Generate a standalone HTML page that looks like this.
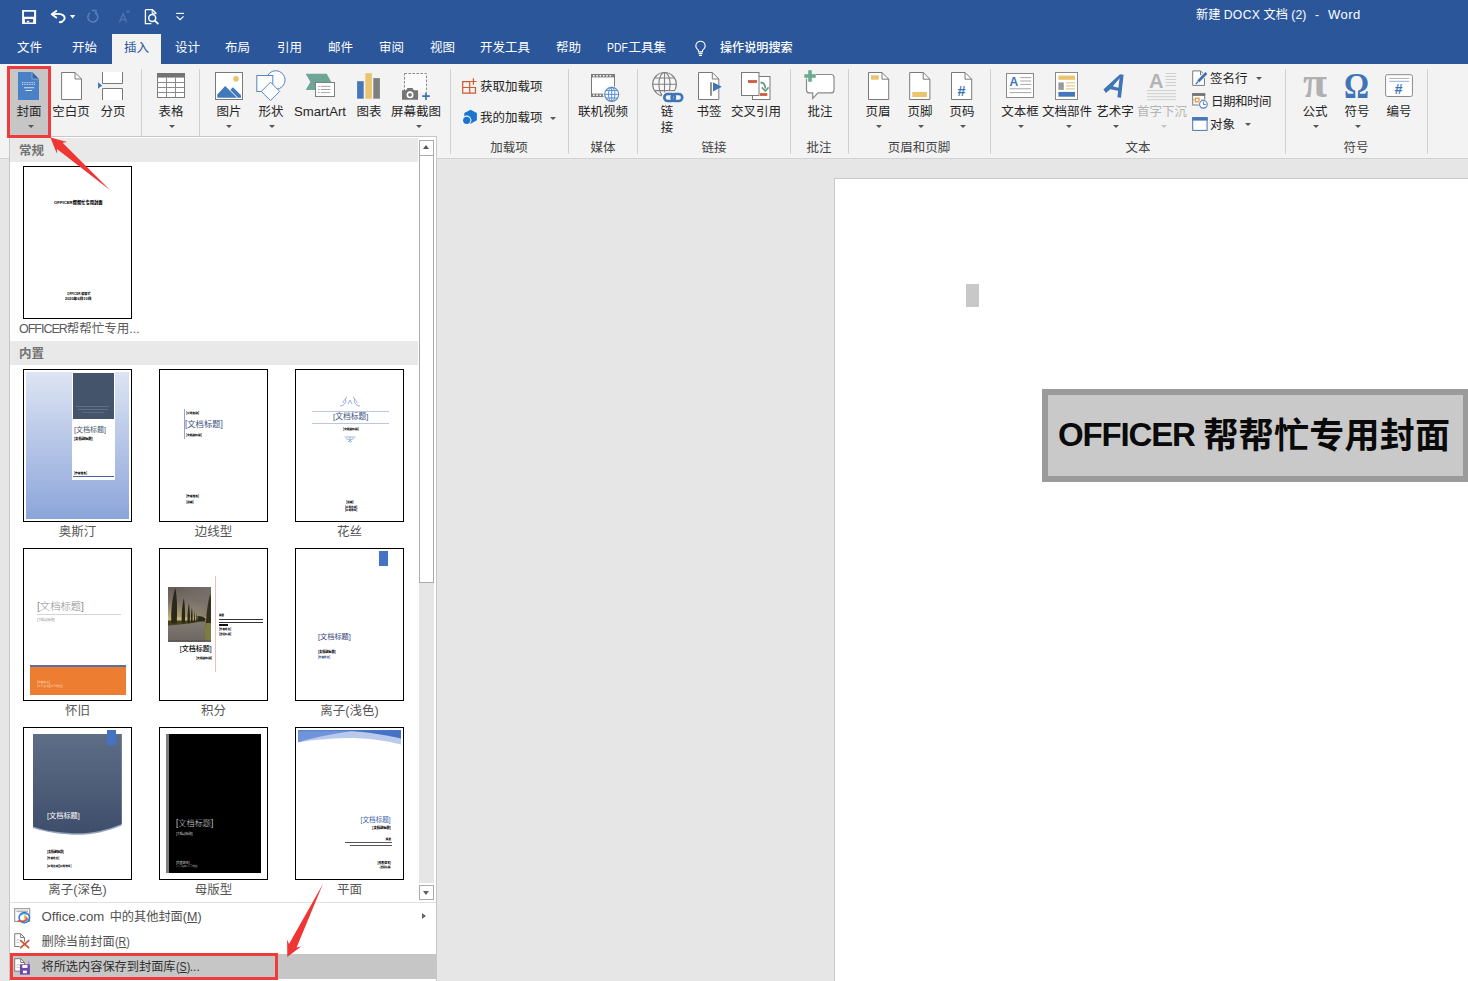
<!DOCTYPE html>
<html lang="zh-CN">
<head>
<meta charset="utf-8">
<title>Word</title>
<style>
*{box-sizing:border-box;margin:0;padding:0}
html,body{width:1468px;height:981px;overflow:hidden;background:#e6e6e6}
body{position:relative;font-family:"Liberation Sans","Noto Sans CJK SC",sans-serif;font-size:12px;color:#262626}
.abs{position:absolute}
#titlebar{position:absolute;left:0;top:0;width:1468px;height:64px;background:#2b579a}
#ribbon{position:absolute;left:0;top:64px;width:1468px;height:95px;background:#f3f3f3;border-bottom:1px solid #d2d2d2}
.tab{position:absolute;top:38px;height:20px;line-height:20px;color:#fff;font-size:12.5px;white-space:nowrap}
#tabactive{position:absolute;left:112px;top:34px;width:49px;height:31px;background:#f3f3f3}
.sep{position:absolute;top:69px;width:1px;height:85px;background:#d0d0d0}
.lbl{position:absolute;white-space:nowrap;font-size:12.5px;line-height:16px;color:#262626;text-align:center;transform:translateX(-50%)}
.grp{position:absolute;top:140px;white-space:nowrap;font-size:12.5px;line-height:16px;color:#444;transform:translateX(-50%)}
.dd{position:absolute;width:0;height:0;border-left:3px solid transparent;border-right:3px solid transparent;border-top:3px solid #555}
.sm{position:absolute;white-space:nowrap;font-size:12.5px;line-height:16px;color:#262626}
/* document */
#page{position:absolute;left:834px;top:178px;width:640px;height:810px;background:#fff;border:1px solid #c8c8c8}
#cursorblk{position:absolute;left:966px;top:284px;width:13px;height:23px;background:#c8c8c8}
#titlebox{position:absolute;left:1042px;top:389px;width:427px;height:93px;background:#c9c9c9;border:6px solid #9b9b9b}
#titletext{position:absolute;left:1058px;top:412px;font-size:35px;line-height:48px;font-weight:bold;color:#0a0a0a;white-space:nowrap;letter-spacing:0.3px}
#titletext span{font-size:33px;letter-spacing:-1.15px;margin-right:8.5px;position:relative;top:-2px}
/* dropdown panel */
#panel{position:absolute;left:9px;top:136px;width:428px;height:850px;background:#fff;border:1px solid #c6c6c6}
.hdr{position:absolute;left:10px;width:408px;height:24px;background:#e9e9e9;color:#727272;font-weight:bold;font-size:12.5px;line-height:26px;padding-left:9px}
.th{position:absolute;width:109px;height:153px;background:#fff;border:1px solid #000;overflow:hidden}
.thl{position:absolute;width:136px;text-align:center;font-size:12.5px;line-height:16px;color:#555;white-space:nowrap}
.tt{position:absolute;font-size:12px;line-height:12px;white-space:nowrap;transform-origin:0 0;display:block}
.mi{position:absolute;left:41.5px;font-size:12.2px;line-height:16px;color:#505050;white-space:nowrap}
.mi i{font-style:normal;font-size:12.5px;display:inline-block;transform:scaleX(0.85);transform-origin:0 50%;margin-right:-2.6px}
</style>
</head>
<body>
<div id="titlebar"></div>
<div id="tabactive"></div>
<div id="ribbon"></div>

<!-- QAT icons -->
<svg class="abs" style="left:20px;top:8px" width="170" height="18" viewBox="20 8 170 18" fill="none">
  <!-- save -->
  <path d="M22.100 10h14v14h-14z" fill="#fff"/>
  <path d="M24 11.700h10.100v5h-10.100zM24.900 19h8.200v3.500h-8.200z" fill="#2b579a"/>
  <path d="M26.800 20.800h2.400v1.600h-2.400z" fill="#fff"/>
  <!-- undo -->
  <path d="M52.600 14.300c4.200-.6 8-.6 10.400.8 2.400 1.500 2.200 4.600-.4 6.200-.9.500-1.800.8-2.800 1" stroke="#fff" stroke-width="1.900" stroke-linecap="round"/>
  <path d="M56.900 10.400l-5.200 3.800 5.200 3.800" stroke="#fff" stroke-width="1.800" stroke-linejoin="round"/>
  <path d="M69.900 15.100h5.400l-2.700 3.300z" fill="#fff"/>
  <!-- redo dim -->
  <path d="M95.2 12.6a5 5 0 1 1-5.2.3" stroke="#5a7fba" stroke-width="1.6"/>
  <path d="M92 10.4h4v4" stroke="#5a7fba" stroke-width="1.5"/>
  <!-- A dim -->
  <path d="M119.5 22.3l3.6-8.6 3.6 8.6M120.8 19.6h4.6" stroke="#4f74b0" stroke-width="1.4"/>
  <path d="M125.8 10.8h4.4l-2.2 2.4z" fill="#4f74b0"/>
  <!-- print preview -->
  <path d="M145.4 9.7h7l3.4 3.4v1.2M145.4 9.7v13.9h6" stroke="#fff" stroke-width="1.3"/>
  <path d="M152.2 9.9v3.4h3.4" stroke="#fff" stroke-width="1"/>
  <circle cx="152.2" cy="18" r="3.5" stroke="#fff" stroke-width="1.5"/>
  <path d="M154.8 20.6l3.6 3.6" stroke="#fff" stroke-width="1.8"/>
  <!-- customize -->
  <path d="M176.2 13.4h7.8" stroke="#fff" stroke-width="1.1"/>
  <path d="M176.6 16.4l3.5 3.3 3.5-3.3" stroke="#fff" stroke-width="1.2"/>
</svg>
<div class="abs" style="left:1196px;top:6px;font-size:12.2px;line-height:18px;color:#fff;white-space:nowrap">新建 <span style="letter-spacing:0.3px">DOCX</span> 文档 (2)</div>
<div class="abs" style="left:1315px;top:6px;font-size:12.2px;line-height:18px;color:#fff">-</div>
<div class="abs" style="left:1328px;top:6px;font-size:13px;line-height:18px;color:#fff;letter-spacing:0.5px">Word</div>

<!-- tabs -->
<div class="tab" style="left:17px">文件</div>
<div class="tab" style="left:72px">开始</div>
<div class="tab" style="left:124px;color:#2b579a">插入</div>
<div class="tab" style="left:175px">设计</div>
<div class="tab" style="left:225px">布局</div>
<div class="tab" style="left:277px">引用</div>
<div class="tab" style="left:328px">邮件</div>
<div class="tab" style="left:379px">审阅</div>
<div class="tab" style="left:430px">视图</div>
<div class="tab" style="left:480px">开发工具</div>
<div class="tab" style="left:556px">帮助</div>
<div class="tab" style="left:607px"><span style="display:inline-block;font-size:13px;transform:scaleX(0.8);transform-origin:0 50%;margin-right:-4.6px">PDF</span>工具集</div>
<svg class="abs" style="left:693px;top:40px" width="15" height="17" viewBox="0 0 15 17" fill="none">
  <path d="M7.5 1.2a4.6 4.6 0 0 0-2.6 8.4c.5.5.7 1.100.7 2v.3h3.800v-.3c0-.9.200-1.500.7-2A4.600 4.600 0 0 0 7.500 1.200z" stroke="#fff" stroke-width="1.1"/>
  <path d="M5.6 13.6h3.800M6 15.500h3" stroke="#fff" stroke-width="1.100"/>
</svg>
<div class="tab" style="left:720px;font-weight:500;font-size:12.1px">操作说明搜索</div>


<!-- cover button highlight -->
<div class="abs" style="left:9px;top:67px;width:41px;height:69px;background:#c6c6c6"></div>
<!-- ribbon separators -->
<div class="sep" style="left:141px"></div>
<div class="sep" style="left:199px"></div>
<div class="sep" style="left:450px"></div>
<div class="sep" style="left:568px"></div>
<div class="sep" style="left:637px"></div>
<div class="sep" style="left:790px"></div>
<div class="sep" style="left:848px"></div>
<div class="sep" style="left:990px"></div>
<div class="sep" style="left:1285px"></div>
<div class="sep" style="left:1427px"></div>
<!-- big button labels -->
<div class="lbl" style="left:29px;top:104px">封面</div>
<div class="dd" style="left:28px;top:125px"></div>
<div class="lbl" style="left:71px;top:104px">空白页</div>
<div class="lbl" style="left:113px;top:104px">分页</div>
<div class="lbl" style="left:171px;top:104px">表格</div>
<div class="dd" style="left:169px;top:125px"></div>
<div class="lbl" style="left:229px;top:104px">图片</div>
<div class="dd" style="left:226px;top:125px"></div>
<div class="lbl" style="left:271px;top:104px">形状</div>
<div class="dd" style="left:269px;top:125px"></div>
<div class="lbl" style="left:320px;top:104px"><span style="font-size:13.2px">SmartArt</span></div>
<div class="lbl" style="left:369px;top:104px">图表</div>
<div class="lbl" style="left:416px;top:104px">屏幕截图</div>
<div class="dd" style="left:416px;top:125px"></div>
<div class="lbl" style="left:603px;top:104px">联机视频</div>
<div class="lbl" style="left:709px;top:104px">书签</div>
<div class="lbl" style="left:756px;top:104px">交叉引用</div>
<div class="lbl" style="left:820px;top:104px">批注</div>
<div class="lbl" style="left:878px;top:104px">页眉</div>
<div class="dd" style="left:876px;top:125px"></div>
<div class="lbl" style="left:920px;top:104px">页脚</div>
<div class="dd" style="left:918px;top:125px"></div>
<div class="lbl" style="left:962px;top:104px">页码</div>
<div class="dd" style="left:960px;top:125px"></div>
<div class="lbl" style="left:1020px;top:104px">文本框</div>
<div class="dd" style="left:1018px;top:125px"></div>
<div class="lbl" style="left:1067px;top:104px">文档部件</div>
<div class="dd" style="left:1066px;top:125px"></div>
<div class="lbl" style="left:1115px;top:104px">艺术字</div>
<div class="dd" style="left:1113px;top:125px"></div>
<div class="lbl" style="left:1162px;top:104px;color:#b4b4b4">首字下沉</div>
<div class="dd" style="left:1161px;top:125px;border-top-color:#c4c4c4"></div>
<div class="lbl" style="left:1315px;top:104px">公式</div>
<div class="dd" style="left:1313px;top:125px"></div>
<div class="lbl" style="left:1357px;top:104px">符号</div>
<div class="dd" style="left:1355px;top:125px"></div>
<div class="lbl" style="left:1399px;top:104px">编号</div>
<div class="lbl" style="left:667px;top:104px;line-height:16px">链<br>接</div>
<!-- group labels -->
<div class="grp" style="left:509px">加载项</div>
<div class="grp" style="left:603px">媒体</div>
<div class="grp" style="left:714px">链接</div>
<div class="grp" style="left:819px">批注</div>
<div class="grp" style="left:919px">页眉和页脚</div>
<div class="grp" style="left:1138px">文本</div>
<div class="grp" style="left:1356px">符号</div>
<!-- small buttons -->
<div class="sm" style="left:480px;top:79px">获取加载项</div>
<div class="sm" style="left:480px;top:110px">我的加载项</div>
<div class="dd" style="left:550px;top:117px"></div>
<div class="sm" style="left:1210px;top:71px">签名行</div>
<div class="dd" style="left:1256px;top:77px"></div>
<div class="sm" style="left:1211px;top:94px;letter-spacing:-0.5px">日期和时间</div>
<div class="sm" style="left:1210px;top:117px">对象</div>
<div class="dd" style="left:1245px;top:123px"></div>

<svg class="abs" style="left:0;top:64px" width="1468" height="74" viewBox="0 64 1468 74" fill="none" font-family="'Liberation Sans','Noto Sans CJK SC',sans-serif">
<!-- 封面 -->
<path d="M18 72h14l7 7v21H18z" fill="#4a80c6"/>
<path d="M32 72v7h7z" fill="#3565a8"/>
<path d="M32 72v7h7" stroke="#8fb2e0" stroke-width="0.8"/>
<path d="M22 82.700h13M22 84.500h13" stroke="#bcd2ee" stroke-width="1.200" stroke-dasharray="1 0.700"/>
<path d="M24 87.800h10.200M25.500 90.500h6.500" stroke="#d6e4f6" stroke-width="1.100"/>
<!-- 空白页 -->
<path d="M61.600 72.500h13.400l6.500 6.500v20.500H61.600z" fill="#fff" stroke="#7a7a7a"/>
<path d="M75 72.500v6.500h6.500" stroke="#7a7a7a"/>
<!-- 分页 -->
<path d="M102.500 72v11.500h20V72z" fill="#fff"/>
<path d="M102.500 100V88.500h20V100z" fill="#fff"/>
<path d="M102.500 72v11.500h20V72M102.500 100V88.500h20V100" stroke="#7a7a7a"/>
<path d="M98 82.200l4.300 3.300-4.300 3.300z" fill="#4a78b8"/>
<!-- 表格 -->
<rect x="157.500" y="73.500" width="27" height="24" fill="#fff" stroke="#7c7c7c"/>
<rect x="157" y="73" width="28" height="4.600" fill="#737373"/>
<path d="M157.500 82.500h27M157.500 87.500h27M157.500 92.500h27M166.500 77.500v20M175.500 77.500v20" stroke="#8a8a8a"/>
<!-- 图片 -->
<rect x="215.500" y="72.500" width="27" height="27" fill="#fff" stroke="#7a7a7a"/>
<circle cx="236" cy="78.800" r="2.800" fill="#e8c468"/>
<path d="M217.300 97.800v-3.300l7.900-8.500 11.800 11.800z" fill="#4178ba"/>
<path d="M230.300 89.900l2.700-2.700 8 8v2.600h-3z" fill="#4178ba"/>
<!-- 形状 -->
<circle cx="275.800" cy="80" r="9.300" fill="#fbfdff" stroke="#5a86bf" stroke-width="1"/>
<rect x="256.800" y="75.500" width="16" height="16" fill="#fbfdff" stroke="#5a86bf" stroke-width="1"/>
<path d="M270.500 82.200l9.200 9.200-9.200 9.200-9.200-9.200z" fill="#fbfdff" stroke="#5a86bf" stroke-width="1"/>
<!-- SmartArt -->
<path d="M305.700 73.800h21l4.600 8.100-4.600 8.100h-21l4.700-8.100z" fill="#6fa595"/>
<rect x="315.500" y="82.500" width="19" height="14" fill="#fff" stroke="#7f7f7f"/>
<path d="M320.800 86.400h9.500M320.800 89.500h9.500M320.800 92.600h9.500" stroke="#9a9a9a" stroke-width="0.900"/>
<path d="M318.300 86.400h1.300M318.300 89.500h1.300M318.300 92.600h1.300" stroke="#7f7f7f" stroke-width="0.900"/>
<!-- 图表 -->
<rect x="357.100" y="81.200" width="6.600" height="17.500" fill="#4478ba"/>
<rect x="365.300" y="73.200" width="6.600" height="25.500" fill="#ebc46f"/>
<rect x="373.300" y="78.100" width="6.600" height="20.600" fill="#7f7f7f"/>
<!-- 屏幕截图 -->
<rect x="404.500" y="73.500" width="22" height="21" fill="#fbfbfb" stroke="#8a8a8a" stroke-dasharray="2.500 1.500"/>
<path d="M402 90.200h4.200l1.300-2.200h5l1.300 2.200h4.300v9.600H402z" fill="#757575"/>
<rect x="418.500" y="92" width="10" height="9" fill="#f3f3f3"/>
<circle cx="410" cy="94.800" r="3.500" fill="#fff"/>
<circle cx="410" cy="94.800" r="1.900" fill="#757575"/>
<path d="M422.200 96.200h7.600M426 92.400v7.600" stroke="#3d6fb4" stroke-width="1.700"/>
<!-- 获取加载项 -->
<path d="M462.700 81.700h7v5.800h5.800v5.700h-12.800zM469.700 87.500v5.700M462.700 87.500h7" stroke="#d05a2c" stroke-width="1.200"/>
<path d="M473.400 78.300v6.400M470.200 81.500h6.400" stroke="#d05a2c" stroke-width="1.200"/>
<!-- 我的加载项 -->
<path d="M470.600 109.700l6.300 3.300v7.300l-6.300 3.400-6.300-3.400v-7.300z" fill="#1b74d0"/>
<circle cx="466.700" cy="120.300" r="4.700" fill="#f3f3f3"/>
<circle cx="466.700" cy="120.300" r="3.600" fill="#1b74d0"/>
<!-- 联机视频 -->
<rect x="591.500" y="74.500" width="23" height="22" fill="#fff" stroke="#7a7a7a"/>
<rect x="591" y="74" width="24" height="3.400" fill="#7a7a7a"/>
<rect x="591" y="93.600" width="24" height="3.400" fill="#7a7a7a"/>
<path d="M593 75.700h20M593 95.300h20" stroke="#fff" stroke-width="1.400" stroke-dasharray="1.600 1.700"/>
<circle cx="611.700" cy="94.300" r="8.600" fill="#f3f3f3"/>
<circle cx="611.700" cy="94.300" r="7" fill="#fff" stroke="#5a8ccc" stroke-width="1.200"/>
<ellipse cx="611.700" cy="94.300" rx="3.200" ry="7" stroke="#5a8ccc" stroke-width="1"/>
<path d="M604.700 94.300h14M611.700 87.300v14M605.800 90.600h11.800M605.800 98h11.800" stroke="#5a8ccc" stroke-width="1"/>
<!-- 链接 -->
<circle cx="664.500" cy="84.300" r="11.800" fill="#f7f7f7" stroke="#808080" stroke-width="1.200"/>
<ellipse cx="664.500" cy="84.300" rx="5.600" ry="11.800" stroke="#808080" stroke-width="1.100"/>
<path d="M652.700 84.300h23.600M664.500 72.500v23.600M654.600 78h19.800M654.600 90.600h19.800" stroke="#808080" stroke-width="1.100"/>
<rect x="661.500" y="91.200" width="23.500" height="12.600" rx="6.300" fill="#f3f3f3"/>
<rect x="664.300" y="94" width="10.600" height="7" rx="3.500" stroke="#3f74b6" stroke-width="2.600"/>
<rect x="671.600" y="94" width="10.600" height="7" rx="3.500" stroke="#3f74b6" stroke-width="2.600"/>
<!-- 书签 -->
<path d="M698.500 72.500h13.800l6.500 6.500v20.500h-20.300z" fill="#fff" stroke="#7a7a7a"/>
<path d="M712.300 72.500v6.500h6.500" stroke="#7a7a7a"/>
<path d="M711 82.200v13.600" stroke="#767676" stroke-width="1.600"/>
<path d="M713 82.200l8.800 4.600-8.800 4.600z" fill="#3d73b7"/>
<!-- 交叉引用 -->
<rect x="752.500" y="76.500" width="17.500" height="23" fill="#fff" stroke="#7a7a7a"/>
<rect x="741.500" y="72.500" width="17.500" height="23" fill="#fff" stroke="#7a7a7a"/>
<rect x="748" y="80.100" width="9" height="2.800" fill="#d05a3c"/>
<rect x="760" y="93.100" width="7.300" height="2.800" fill="#d05a3c"/>
<path d="M760.500 82.300c3 .3 4.800 2.300 4.800 6.200" stroke="#5d9b7d" stroke-width="1.700"/>
<path d="M761.800 87.400l3.500 3.600 3.300-3.600" stroke="#5d9b7d" stroke-width="1.600"/>
<!-- 批注 -->
<path d="M809.500 74.500h21.500a3 3 0 0 1 3 3v12.400a3 3 0 0 1-3 3h-13l-5.300 5.600v-5.600h-3.200a3 3 0 0 1-3-3V77.500a3 3 0 0 1 3-3z" fill="#fff" stroke="#8a8a8a" stroke-width="1.200"/>
<path d="M810 70.300v11.400M804.300 76h11.400" stroke="#f3f3f3" stroke-width="5.500"/>
<path d="M810 70.300v11.400M804.300 76h11.400" stroke="#6aa890" stroke-width="3.500"/>
<!-- 页眉 -->
<path d="M868.500 72.500h13.500l6.700 6.700v20.300h-20.200z" fill="#fff" stroke="#7a7a7a"/>
<path d="M882 72.500v6.700h6.700" stroke="#7a7a7a"/>
<rect x="871" y="75.300" width="7.800" height="4.400" fill="#eac46e"/>
<!-- 页脚 -->
<path d="M909.700 72.500h13.500l6.700 6.700v20.300h-20.200z" fill="#fff" stroke="#7a7a7a"/>
<path d="M923.200 72.500v6.700h6.700" stroke="#7a7a7a"/>
<rect x="912.300" y="92" width="14.600" height="5" fill="#eac46e"/>
<!-- 页码 -->
<path d="M951.500 72.500h13.500l6.700 6.700v20.300h-20.200z" fill="#fff" stroke="#7a7a7a"/>
<path d="M965 72.500v6.700h6.700" stroke="#7a7a7a"/>
<text x="961.300" y="96.200" font-size="14.500" font-weight="bold" font-style="italic" fill="#3d72b7" text-anchor="middle">#</text>
<!-- 文本框 -->
<rect x="1006.500" y="73.500" width="27" height="24" fill="#fff" stroke="#8a8a8a"/>
<text x="1013.800" y="85.800" font-size="12" font-weight="bold" fill="#3f74b7" text-anchor="middle">A</text>
<path d="M1020.200 77.600h11M1020.200 81h11M1020.200 84.400h11M1009.400 88.800h21.800M1009.400 92.600h21.800" stroke="#a6a6a6" stroke-width="1"/>
<!-- 文档部件 -->
<rect x="1055.500" y="72.500" width="22" height="27" fill="#fff" stroke="#8a8a8a"/>
<rect x="1058.400" y="75.600" width="16.600" height="4.200" fill="#eac46e"/>
<rect x="1058.400" y="82.400" width="5.400" height="7.500" fill="#9a9a9a"/>
<path d="M1065.800 82.900h9.200M1065.800 85.900h9.200M1065.800 88.900h9.200" stroke="#d9b865" stroke-width="0.900"/>
<rect x="1058.400" y="91.900" width="16.600" height="4.800" fill="#4478ba"/>
<!-- 艺术字 -->
<path d="M1103.400 89.400l16.600-15.200 3.600.6-2.600 23-3.600-.6.700-6.400-7.800-1.500-4.400 3.800zM1118.400 87.700l1.200-9.400-6.800 7.900z" fill="#3f74b7" fill-rule="evenodd"/>
<!-- 首字下沉 -->
<text x="1156.200" y="87.800" font-size="20.500" font-weight="bold" fill="#b3b3b3" text-anchor="middle" textLength="14.500" lengthAdjust="spacingAndGlyphs">A</text>
<path d="M1165.500 73.500h10.700M1165.500 76.500h10.700M1165.500 79.500h10.700M1165.500 82.500h10.700M1165.500 85.500h10.700M1147 90.600h29.200M1147 93.700h29.200M1147 96.700h29.200M1147 99.700h29.200" stroke="#cfcfcf" stroke-width="1"/>
<!-- 签名行 -->
<path d="M1192.700 70.900h7.800l4 4v10.500h-11.800z" fill="#fff" stroke="#7a7a7a"/>
<path d="M1200.500 70.900v4h4" stroke="#7a7a7a"/>
<path d="M1206.200 73.200l-9 9.200" stroke="#f3f3f3" stroke-width="4.500"/>
<path d="M1206.400 73l-8.200 8.400" stroke="#3f6fb0" stroke-width="2.600"/>
<path d="M1198 81.600l-2.200 2.400" stroke="#3f6fb0" stroke-width="1.400"/>
<!-- 日期和时间 -->
<rect x="1192.700" y="93.800" width="12" height="11.200" fill="#fff" stroke="#7a7a7a"/>
<rect x="1192.200" y="93.300" width="13" height="2.600" fill="#737373"/>
<rect x="1195.400" y="98.200" width="3.600" height="3.600" fill="#fff" stroke="#e8954a" stroke-width="1.300"/>
<path d="M1192.700 99.700h2M1200.700 99.700h4" stroke="#9a9a9a" stroke-width="0.800"/>
<circle cx="1203.400" cy="104.300" r="4.900" fill="#f3f3f3"/>
<circle cx="1203.400" cy="104.300" r="3.800" fill="#fff" stroke="#4a7cc0" stroke-width="1.100"/>
<path d="M1203.400 101.800v2.700h2.300" stroke="#4a7cc0" stroke-width="1"/>
<!-- 对象 -->
<rect x="1192.700" y="117.700" width="14.400" height="12.700" fill="#fbfdff" stroke="#4a76b8"/>
<rect x="1192.200" y="117.200" width="15.400" height="3.400" fill="#4a76b8"/>
<!-- 公式 -->
<text x="1314.900" y="96.500" font-family="'Liberation Serif',serif" font-weight="bold" font-size="45" fill="#b0b0b0" text-anchor="middle" textLength="24" lengthAdjust="spacingAndGlyphs">π</text>
<!-- 符号 -->
<text x="1356.500" y="97.600" font-family="'Liberation Serif',serif" font-weight="bold" font-size="36" fill="#3f74b7" text-anchor="middle" textLength="25" lengthAdjust="spacingAndGlyphs">Ω</text>
<!-- 编号 -->
<rect x="1385.600" y="74.700" width="26.800" height="21.800" rx="1.800" fill="#fff" stroke="#8a8a8a"/>
<path d="M1389.200 78.400h20" stroke="#a6a6a6" stroke-width="0.900"/>
<path d="M1389.200 81.300h20" stroke="#8aa6cc" stroke-width="0.900"/>
<text x="1398.300" y="93.800" font-size="14" font-weight="bold" font-style="italic" fill="#3d72b7" text-anchor="middle">#</text>
</svg>


<!-- document area -->
<div id="page"></div>
<div id="cursorblk"></div>
<div id="titlebox"></div>
<div id="titletext"><span>OFFICER</span>帮帮忙专用封面</div>

<!-- dropdown panel -->
<div id="panel"></div>
<div class="hdr" style="top:138px">常规</div>
<div class="hdr" style="top:341px">内置</div>
<div class="th" style="left:23px;top:166px"><span class="tt" style="left:29.5px;top:33px;transform:scale(0.355);color:#000;font-weight:900;">OFFICER帮帮忙专用封面</span><span class="tt" style="left:43px;top:125.2px;transform:scale(0.255);color:#000;font-weight:900;">OFFICER 帮帮忙</span><span class="tt" style="left:41px;top:130.3px;transform:scale(0.32);color:#000;font-weight:900;">2020年6月10日</span></div>
<div class="abs" style="left:19px;top:320px;font-size:12.5px;line-height:18px;color:#5a5a5a;white-space:nowrap"><span style="letter-spacing:-1px">OFFICER</span>帮帮忙专用...</div>
<div class="th" style="left:23px;top:369px"><div class="abs" style="left:2px;top:2px;width:103px;height:147px;background:linear-gradient(#dde4f3,#b9c8e8 45%,#8ba5da)"></div><div class="abs" style="left:47.500px;top:2px;width:43px;height:108px;background:#fff"></div><div class="abs" style="left:48.500px;top:3px;width:41px;height:46px;background:#44546a"></div><div class="abs" style="left:52px;top:36px;width:33px;height:1px;background:#626f86"></div><div class="abs" style="left:54px;top:39px;width:30px;height:1px;background:#626f86"></div><div class="abs" style="left:58px;top:42px;width:22px;height:1px;background:#5d6a81"></div><span class="tt" style="left:49.5px;top:55.5px;transform:scale(0.583);color:#44546a;">[文档标题]</span><span class="tt" style="left:50px;top:67px;transform:scale(0.275);color:#000;font-weight:900;">[文档副标题]</span><span class="tt" style="left:50px;top:101.5px;transform:scale(0.233);color:#000;font-weight:900;">[作者姓名]</span><div class="abs" style="left:48.500px;top:106px;width:41px;height:1.200px;background:#4a66a0"></div></div>
<div class="th" style="left:159px;top:369px"><div class="abs" style="left:23.500px;top:38.500px;width:1px;height:30px;background:#8fa2d4"></div><span class="tt" style="left:25.5px;top:42px;transform:scale(0.233);color:#000;font-weight:900;">[公司名称]</span><span class="tt" style="left:25px;top:49.5px;transform:scale(0.692);color:#3b4f81;">[文档标题]</span><span class="tt" style="left:25.5px;top:63.5px;transform:scale(0.233);color:#000;font-weight:900;">[文档副标题]</span><span class="tt" style="left:25.5px;top:125px;transform:scale(0.233);color:#000;font-weight:900;">[作者姓名]</span><span class="tt" style="left:25.5px;top:130.5px;transform:scale(0.233);color:#000;font-weight:900;">[日期]</span></div>
<div class="th" style="left:295px;top:369px"><svg class="abs" style="left:43px;top:26px" width="22" height="12" viewBox="0 0 22 12" fill="none" stroke="#8fa8d8" stroke-width="0.900"><path d="M1 10c3 0 5-2 6-5M21 10c-3 0-5-2-6-5M7 5c-1-1-1-3 1-4M15 5c1-1 1-3-1-4M4 7c0-2 1-3 2-3M18 7c0-2-1-3-2-3M9 8l2-4 2 4"/></svg><div class="abs" style="left:16px;top:40.800px;width:77px;height:1px;background:#bcc8de"></div><span class="tt" style="left:36.5px;top:41.8px;transform:scale(0.650);color:#3b4f81;">[文档标题]</span><div class="abs" style="left:16px;top:53.400px;width:77px;height:1px;background:#bcc8de"></div><span class="tt" style="left:46.5px;top:57.5px;transform:scale(0.233);color:#000;font-weight:900;">[文档副标题]</span><svg class="abs" style="left:48px;top:66px" width="12" height="8" viewBox="0 0 12 8" fill="none" stroke="#8fb0d8" stroke-width="0.900"><path d="M0.500 1h11M2 2.500l4 1.500 4-1.500M6 1v6M4 6l2-2 2 2"/></svg><span class="tt" style="left:49.5px;top:130.5px;transform:scale(0.233);color:#000;font-weight:900;">[日期]</span><span class="tt" style="left:48.5px;top:136px;transform:scale(0.217);color:#000;font-weight:900;">[公司名称]</span><span class="tt" style="left:48.5px;top:139px;transform:scale(0.217);color:#000;font-weight:900;">[公司地址]</span></div>
<div class="th" style="left:23px;top:548px"><span class="tt" style="left:12.5px;top:51.5px;transform:scale(0.858);color:#8c8c8c;font-weight:300;">[文档标题]</span><div class="abs" style="left:13px;top:64.500px;width:84px;height:1px;background:#d4d4d4"></div><span class="tt" style="left:13px;top:68.5px;transform:scale(0.267);color:#8a8a8a;">[文档副标题]</span><div class="abs" style="left:5.500px;top:116px;width:96px;height:29.500px;background:#ed7d31"></div><div class="abs" style="left:5.500px;top:116px;width:96px;height:2.200px;background:#5b6fa5"></div><span class="tt" style="left:13px;top:132px;transform:scale(0.233);color:#fbd9bf;">[作者姓名]</span><span class="tt" style="left:13px;top:136px;transform:scale(0.233);color:#fbd9bf;">[公司名称][公司地址]</span></div>
<div class="th" style="left:159px;top:548px"><svg class="abs" style="left:7.700px;top:38px" width="43.300" height="54.800" viewBox="0 0 43.300 54.800" preserveAspectRatio="none"><defs><linearGradient id="sky" x1="0" y1="0" x2="0" y2="1"><stop offset="0" stop-color="#625753"/><stop offset="0.250" stop-color="#7a6f66"/><stop offset="0.450" stop-color="#a89a72"/><stop offset="0.620" stop-color="#cdbf80"/><stop offset="0.660" stop-color="#6a6838"/><stop offset="1" stop-color="#6a6838"/></linearGradient><linearGradient id="skr" x1="0" y1="0" x2="1" y2="0"><stop offset="0" stop-color="#7a716d" stop-opacity="0"/><stop offset="0.550" stop-color="#7a716d" stop-opacity="0.550"/><stop offset="1" stop-color="#77706c" stop-opacity="0.850"/></linearGradient><linearGradient id="road" x1="0" y1="0" x2="0" y2="1"><stop offset="0" stop-color="#857e74"/><stop offset="1" stop-color="#6c6562"/></linearGradient></defs><rect width="43.300" height="54.800" fill="url(#sky)"/><rect width="43.300" height="30" fill="url(#skr)"/><path d="M0 33.500h30l7-1.500 6.300 1v6H0z" fill="#45421f"/><path d="M0 38.500c12-.8 26-2.300 33-4.800 2.500-1 3.600-2.200 4-3.200l1.300.4c-.2 2.500-1.300 8-1.800 24H0z" fill="url(#road)"/><path d="M38.300 31l5 1v22.800h-6.800c.5-12 1-19 1.800-23.800z" fill="#7d7a42"/><path d="M7.300 1c1.600 7 2.300 22 1.400 35.500H3.400C2.600 24 4.800 8 7.300 1zM15.800 11.200c1.200 6 1.700 16 1.200 25h-3.200c-.5-9 .5-19 2-25zM20.900 16.600c.9 5 1.300 13 1 19.600h-2.300c-.4-6.500.2-14.600 1.300-19.600zM23.900 20.500c.7 4 .9 10 .7 15.500h-1.700c-.3-5.500.2-11.500 1-15.500zM26.400 23.500l.8 12h-1.600zM28.300 26l.7 9h-1.400zM29.500 29c3 0 6 .8 7.800 2.200l-.5 3.300H29z" fill="#2c2817"/><path d="M42.500 6.500c.5 5 .8 10 .8 14v15.500h-5.300c.5-11 2-22 4.500-29.500z" fill="#322e1a"/><rect y="53" width="43.300" height="1.800" fill="#5a5452" opacity="0.700"/></svg><div class="abs" style="left:55.200px;top:27px;width:1px;height:96px;background:#ecc0b4"></div><span class="tt" style="right:55.5px;top:96px;transform:scale(0.583);transform-origin:100% 0;color:#000;font-weight:500;">[文档标题]</span><span class="tt" style="right:55.5px;top:107.5px;transform:scale(0.233);transform-origin:100% 0;color:#000;font-weight:900;">[文档副标题]</span><span class="tt" style="left:59px;top:64.5px;transform:scale(0.217);color:#000;font-weight:900;">摘要</span><div class="abs" style="left:59px;top:69.800px;width:44px;height:1.400px;background:#333"></div><div class="abs" style="left:59px;top:72.500px;width:44px;height:1.400px;background:#333"></div><div class="abs" style="left:59px;top:75.200px;width:9px;height:1.400px;background:#111"></div><span class="tt" style="left:59px;top:79px;transform:scale(0.217);color:#000;font-weight:900;">[作者姓名]</span><span class="tt" style="left:59px;top:83.5px;transform:scale(0.217);color:#000;font-weight:900;">[课程标题]</span></div>
<div class="th" style="left:295px;top:548px"><div class="abs" style="left:83.400px;top:2.300px;width:8.200px;height:15.200px;background:#4472c4"></div><span class="tt" style="left:21.5px;top:84px;transform:scale(0.600);color:#2f3f7a;">[文档标题]</span><span class="tt" style="left:22px;top:100.5px;transform:scale(0.258);color:#000;font-weight:900;">[文档副标题]</span><span class="tt" style="left:22px;top:106.5px;transform:scale(0.217);color:#2f3f7a;font-weight:900;">[作者姓名]</span></div>
<div class="th" style="left:23px;top:727px"><svg class="abs" style="left:9.400px;top:5.600px" width="89" height="103" viewBox="0 0 89 103"><defs><linearGradient id="ion" x1="0" y1="0" x2="0" y2="1"><stop offset="0" stop-color="#5f6e87"/><stop offset="1" stop-color="#3e4e6b"/></linearGradient></defs><path d="M0 0h88.700v91.500c-14 6-30 9.300-44 9.300S12 98 0 94z" fill="#93a3bc"/><path d="M0 0h88.700v90c-14 6-30 9.300-44 9.300S12 97 0 92.500z" fill="url(#ion)"/></svg><div class="abs" style="left:83.300px;top:2.300px;width:8.600px;height:15.200px;background:#4472c4"></div><span class="tt" style="left:22.5px;top:84px;transform:scale(0.600);color:#fff;">[文档标题]</span><span class="tt" style="left:23px;top:122px;transform:scale(0.250);color:#000;font-weight:900;">[文档副标题]</span><span class="tt" style="left:23px;top:128.5px;transform:scale(0.217);color:#000;font-weight:900;">[作者姓名]</span><span class="tt" style="left:23px;top:137px;transform:scale(0.217);color:#000;font-weight:900;">[公司名称][公司地址]</span></div>
<div class="th" style="left:159px;top:727px"><div class="abs" style="left:6.200px;top:6.200px;width:95px;height:139px;background:#000"></div><div class="abs" style="left:6.200px;top:6.200px;width:2.600px;height:139px;background:#7d7d7d"></div><span class="tt" style="left:16px;top:91px;transform:scale(0.683);color:#d0d0d0;font-weight:300;">[文档标题]</span><span class="tt" style="left:16px;top:104px;transform:scale(0.250);color:#ddd;">[文档副标题]</span><span class="tt" style="left:16px;top:132.5px;transform:scale(0.250);color:#ddd;">[作者姓名]</span><span class="tt" style="left:16px;top:137px;transform:scale(0.200);color:#bbb;">[公司名称][公司地址]</span></div>
<div class="th" style="left:295px;top:727px"><svg class="abs" style="left:2.300px;top:2.300px" width="103" height="16" viewBox="0 0 103 16"><path d="M0 0h103v14.500C80 8.500 55 7 35 8.500 20 9.600 8 11 0 12.500z" fill="#b9caec"/><path d="M0 0h60C40 3 18 7 0 12.200z" fill="#6f94d8"/><path d="M40 0h63v8.500C85 4 62 1.200 40 0z" fill="#4472c4"/><path d="M0 0h103v1.200H0z" fill="#4f7bcb" opacity="0.600"/></svg><span class="tt" style="right:12px;top:87.5px;transform:scale(0.550);transform-origin:100% 0;color:#3d5fa8;">[文档标题]</span><span class="tt" style="right:12px;top:98px;transform:scale(0.275);transform-origin:100% 0;color:#000;font-weight:900;">[文档副标题]</span><span class="tt" style="right:12px;top:109.5px;transform:scale(0.217);transform-origin:100% 0;color:#000;font-weight:900;">摘要</span><div class="abs" style="left:48.500px;top:114px;width:47.500px;height:1.200px;background:#555"></div><div class="abs" style="left:54px;top:117px;width:42px;height:1.200px;background:#555"></div><span class="tt" style="right:12px;top:133.5px;transform:scale(0.242);transform-origin:100% 0;color:#000;font-weight:900;">[作者姓名]</span><span class="tt" style="right:12px;top:137.8px;transform:scale(0.208);transform-origin:100% 0;color:#000;font-weight:900;">[课程标题]</span></div>
<div class="thl" style="left:9.5px;top:524px">奥斯汀</div>
<div class="thl" style="left:145.5px;top:524px">边线型</div>
<div class="thl" style="left:281.5px;top:524px">花丝</div>
<div class="thl" style="left:9.5px;top:703px">怀旧</div>
<div class="thl" style="left:145.5px;top:703px">积分</div>
<div class="thl" style="left:281.5px;top:703px">离子(浅色)</div>
<div class="thl" style="left:9.5px;top:882px">离子(深色)</div>
<div class="thl" style="left:145.5px;top:882px">母版型</div>
<div class="thl" style="left:281.5px;top:882px">平面</div>
<div class="abs" style="left:419px;top:140px;width:15px;height:743px;background:#e6e6e6"></div>
<div class="abs" style="left:419px;top:140px;width:15px;height:16px;background:#fff;border:1px solid #ababab"></div>
<div class="abs" style="left:419px;top:155px;width:15px;height:428px;background:#fff;border:1px solid #ababab"></div>
<div class="abs" style="left:419px;top:885px;width:15px;height:15px;background:#fff;border:1px solid #ababab"></div>
<div class="abs" style="left:423px;top:145px;width:0;height:0;border-left:3.500px solid transparent;border-right:3.500px solid transparent;border-bottom:4px solid #555"></div>
<div class="abs" style="left:423px;top:891px;width:0;height:0;border-left:3.500px solid transparent;border-right:3.500px solid transparent;border-top:4px solid #606060"></div>
<div class="abs" style="left:10px;top:902px;width:426px;height:1px;background:#e1e1e1"></div>
<div class="abs" style="left:10px;top:954px;width:426px;height:25px;background:#c6c6c6"></div>
<div class="mi" style="top:909px"><span style="font-size:13.2px;letter-spacing:0;margin-right:2px">Office.com</span> 中的其他封面<i style="transform:none;margin-right:0">(<u>M</u>)</i></div>
<div class="mi" style="top:934px">删除当前封面<i>(<u>R</u>)</i></div>
<div class="mi" style="top:959px;color:#2e2e2e">将所选内容保存到封面库<i>(<u>S</u>)</i>...</div>
<div class="abs" style="left:422px;top:913px;width:0;height:0;border-top:3.500px solid transparent;border-bottom:3.500px solid transparent;border-left:4.500px solid #666"></div>
<svg class="abs" style="left:12px;top:905px" width="22" height="74" viewBox="12 905 22 74" fill="none">
<!-- office.com -->
<rect x="14.700" y="908.700" width="15" height="12.700" fill="#fff" stroke="#8a8a8a"/>
<path d="M16.500 911.200h11.500" stroke="#a0a0a0" stroke-width="1.200"/>
<circle cx="24.300" cy="917.600" r="5.200" fill="#fff" stroke="#2f7ad0" stroke-width="1.500"/>
<path d="M20.500 915.500c1.500-2 4.500-2.500 6.500-1M27.800 919.200c-1.500 2.200-4.500 2.600-6.500 1.200" stroke="#39a0d8" stroke-width="1.200"/>
<path d="M17.800 920.800c3.500 1.500 7.500.5 9.500-3" stroke="#e0532c" stroke-width="1.700"/>
<path d="M24.300 914.800l3.600 2.400-3.600 2.200z" fill="#f0a030"/>
<!-- delete cover -->
<path d="M14.700 933.700h6l3.800 3.800v9h-9.800z" fill="#fff" stroke="#7a7a7a"/>
<path d="M20.700 933.700v3.800h3.800" stroke="#7a7a7a"/>
<path d="M16.800 940.800l1.200-1.800 1.200 1.800M16.600 942.500h3" stroke="#a8b4c4" stroke-width="0.700"/>
<path d="M20.200 940.200l9 8M29.200 940.200l-9 8" stroke="#fff" stroke-width="3.200"/>
<path d="M20.200 940.200l9 8M29.200 940.200l-9 8" stroke="#c8553a" stroke-width="1.700"/>
<!-- save to gallery -->
<path d="M14.700 958.700h6l3.800 3.800v8.700h-9.800z" fill="#fff" stroke="#7a7a7a"/>
<path d="M20.700 958.700v3.800h3.800" stroke="#7a7a7a"/>
<path d="M16.800 965.800l1.200-1.800 1.200 1.800M16.600 967.500h3" stroke="#a8b4c4" stroke-width="0.700"/>
<rect x="19.900" y="964.200" width="10" height="10.400" fill="#7048a8"/>
<rect x="22.300" y="964.900" width="5.200" height="3" fill="#fff"/>
<rect x="23" y="970.600" width="3.800" height="2.600" fill="#fff"/>
<path d="M28.600 961.200v3" stroke="#a890d0" stroke-width="1.200"/>
</svg>
<div class="abs" style="left:10px;top:953px;width:268px;height:27px;border:3px solid #ee3b3b"></div>
<!-- red highlight box around 封面 -->
<div class="abs" style="left:7px;top:66px;width:44px;height:72px;border:3px solid #ee3b3b"></div>
<svg class="abs" style="left:0;top:0;pointer-events:none" width="440" height="981" viewBox="0 0 440 981">
<polygon points="110.5,190.6 62.6,142.7 67.2,142.0 50.4,137.6 56.9,153.7 57.0,149.0" fill="#f03535"/>
<polygon points="322.9,884.0 289.0,943.9 287.1,939.6 287.3,957.0 301.1,946.5 296.6,947.6" fill="#f03535"/>
</svg>

</body>
</html>
